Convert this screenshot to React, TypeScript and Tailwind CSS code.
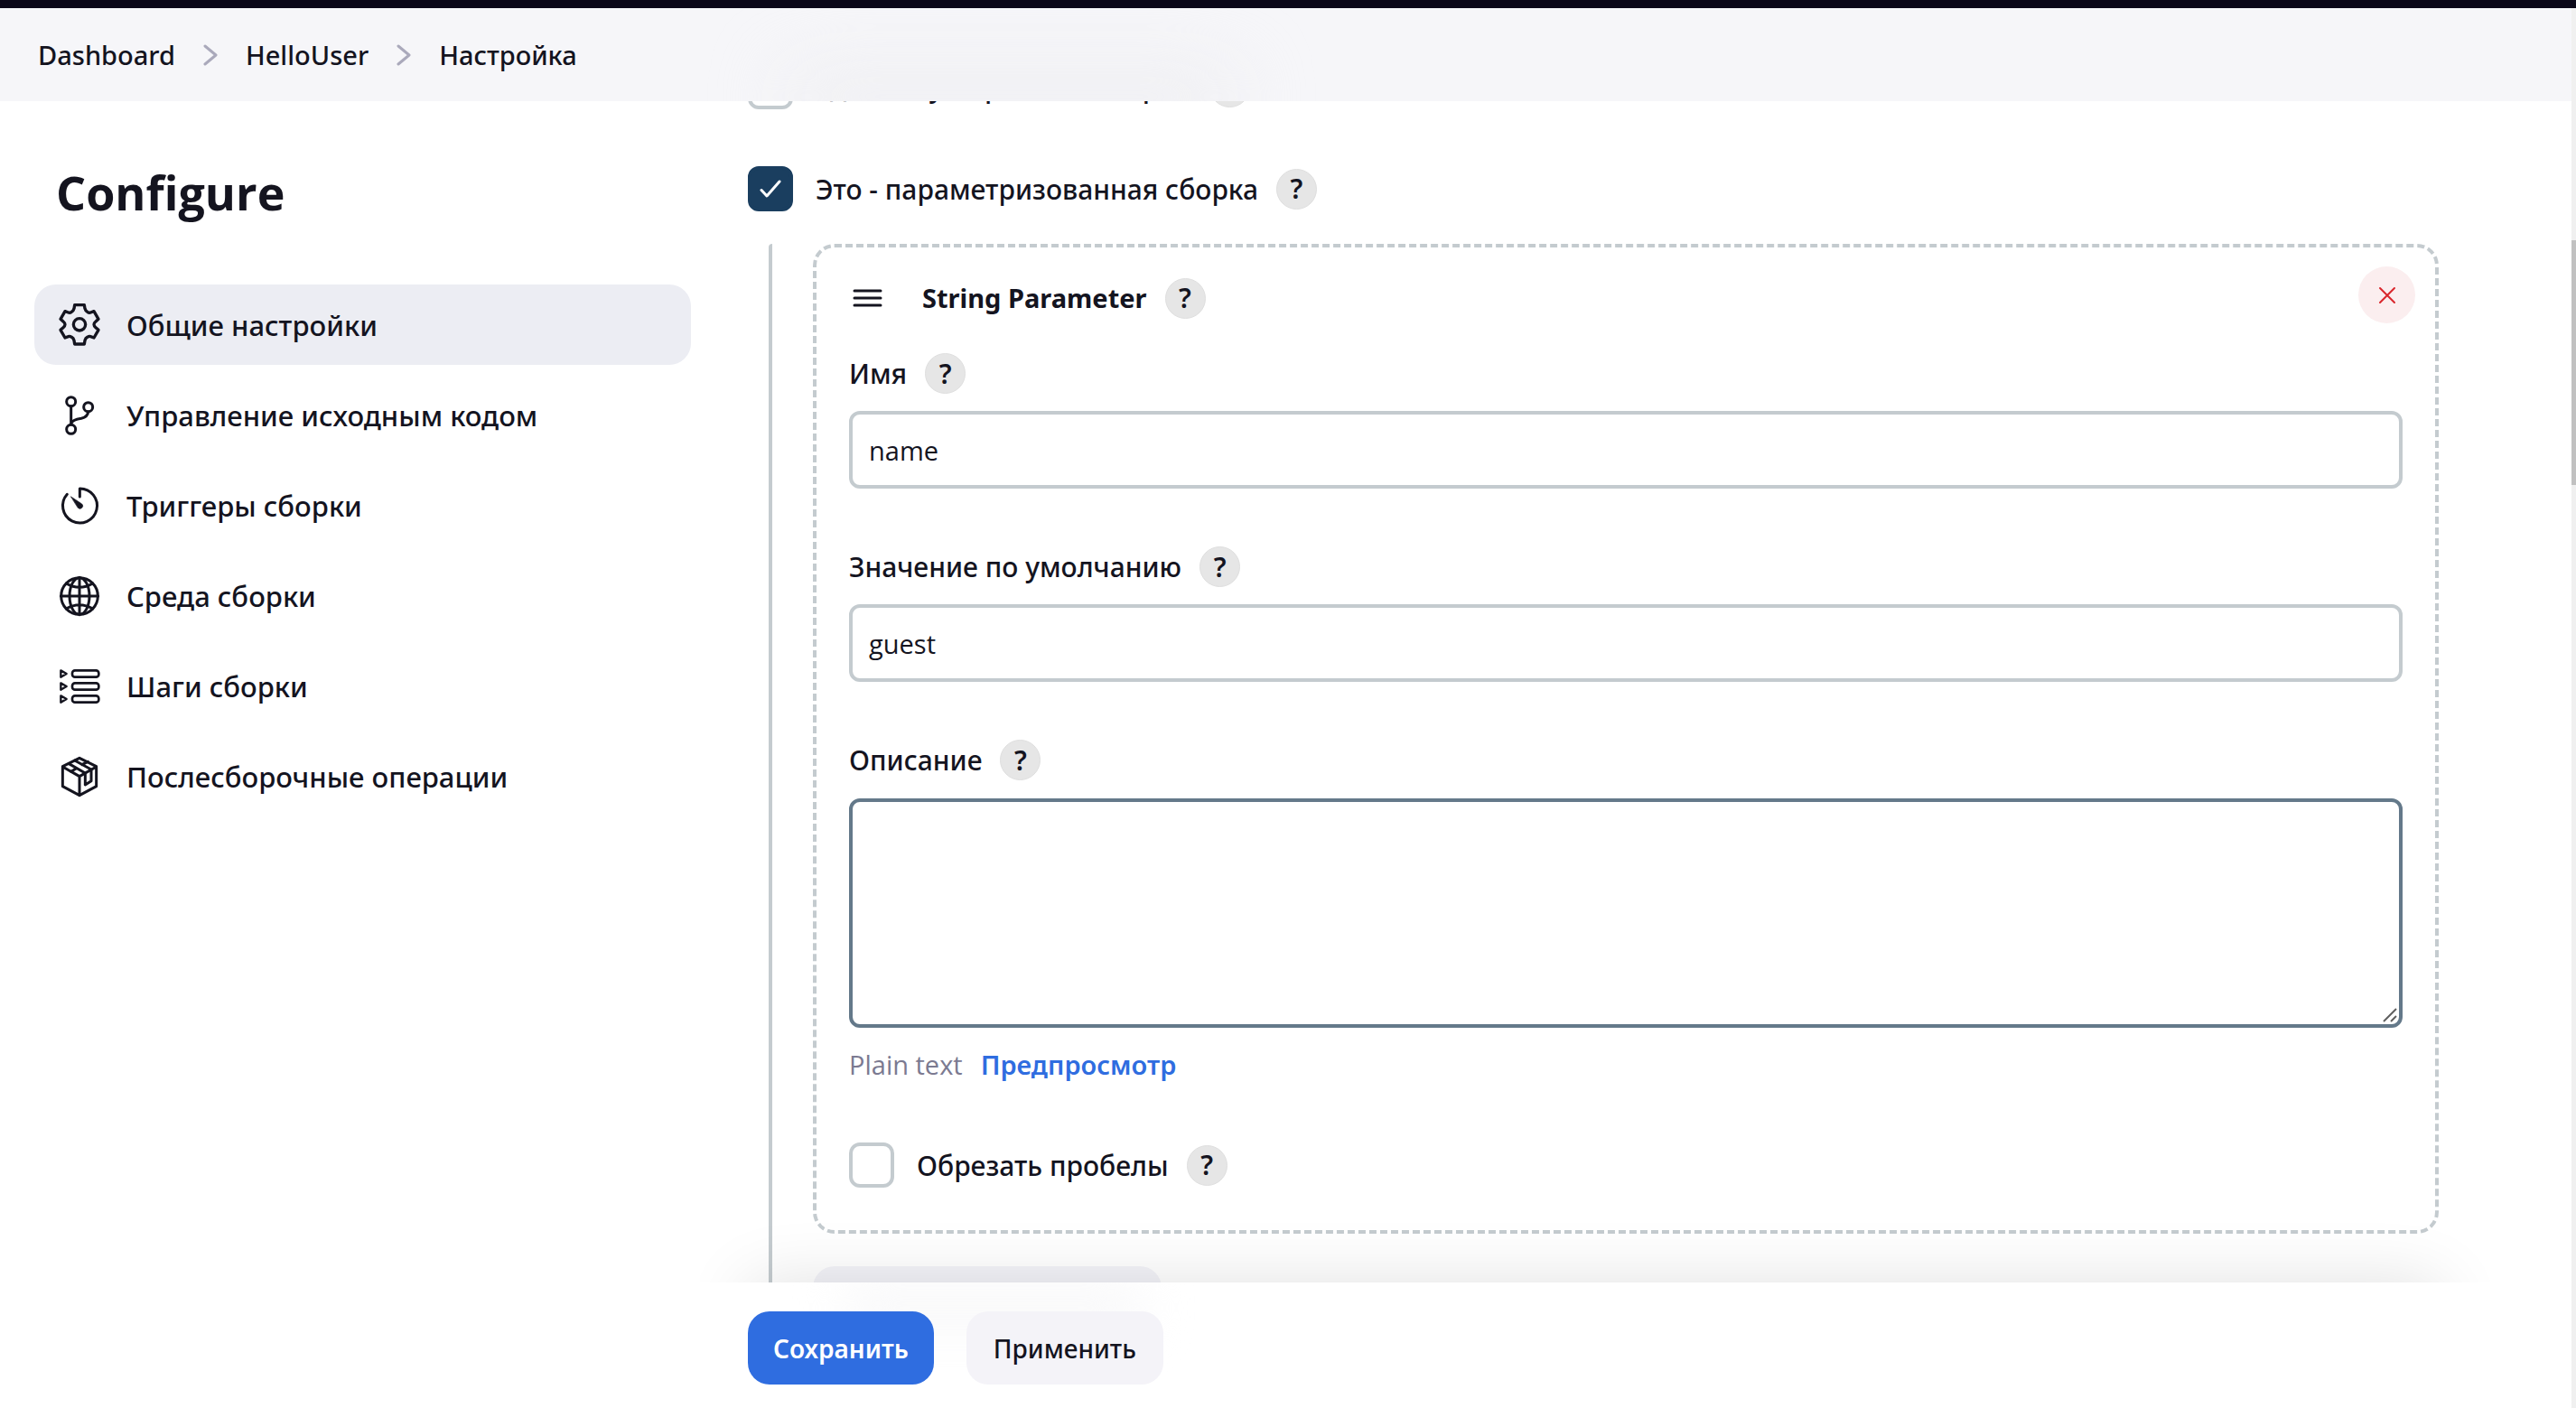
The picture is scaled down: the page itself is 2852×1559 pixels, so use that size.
import { useState, type ReactNode } from "react";

const ICON_STROKE = {
  fill: "none",
  stroke: "currentColor",
  strokeWidth: 9,
  strokeLinecap: "round" as const,
  strokeLinejoin: "round" as const,
};

function NavIcon({ viewBox, children }: { viewBox: string; children: ReactNode }) {
  return (
    <svg viewBox={viewBox} className="size-12 shrink-0" aria-hidden="true" {...ICON_STROKE}>
      {children}
    </svg>
  );
}

const NAV: { label: string; icon: ReactNode }[] = [
  {
    label: "Общие настройки",
    icon: (
      <NavIcon viewBox="42 47 144 144">
        <path d="M98 52h32l2 12Q134 72 140 75 146 79 151 77L162 73 177 99 168 107Q162 112 162 117 162 122 168 127L177 135 162 161 151 157Q146 155 140 159 134 162 132 170L130 182H98L96 170Q94 162 88 159 82 155 77 157L66 161 51 135 60 127Q66 122 66 117 66 112 60 107L51 99 66 73 77 77Q82 79 88 75 94 72 96 64Z" strokeWidth="10" />
        <circle cx="114" cy="117" r="20" strokeWidth="10" />
      </NavIcon>
    ),
  },
  {
    label: "Управление исходным кодом",
    icon: (
      <NavIcon viewBox="42 346 144 144">
        <circle cx="86" cy="372" r="15" />
        <circle cx="143" cy="390" r="15" />
        <circle cx="86" cy="464" r="15" />
        <path d="M86 388V448M143 406Q141 423 120 428 90 433 87 444" />
      </NavIcon>
    ),
  },
  {
    label: "Триггеры сборки",
    icon: (
      <NavIcon viewBox="42 648 144 144">
        <path d="M115 690V663A57 57 0 1 1 73 682" />
        <path d="M86 690L122 714A9 9 0 1 1 109 727Z" fill="currentColor" strokeWidth="2" />
      </NavIcon>
    ),
  },
  {
    label: "Среда сборки",
    icon: (
      <NavIcon viewBox="42 48 144 144">
        <circle cx="114" cy="120" r="61" />
        <ellipse cx="114" cy="120" rx="33" ry="61" />
        <path d="M114 58V182M52 120H176M70 78Q114 104 158 78M70 162Q114 136 158 162" />
      </NavIcon>
    ),
  },
  {
    label: "Шаги сборки",
    icon: (
      <NavIcon viewBox="42 350 144 144">
        {[380, 422, 464].map((y) => (
          <g key={y} strokeWidth="7">
            <path d={`M52 ${y - 11}L71 ${y}L52 ${y + 11}Z`} />
            <rect x="90" y={y - 11} width="88" height="22" rx="9" strokeWidth="8" />
          </g>
        ))}
      </NavIcon>
    ),
  },
  {
    label: "Послесборочные операции",
    icon: (
      <NavIcon viewBox="42 651 144 144">
        <path d="M114 661L170 689V755L114 785 58 755V689ZM58 690L114 722 170 690M114 722V785" />
        <path d="M98 669L153 699V737L133 750V711L79 680M86 706L104 695M122 683L142 673" />
      </NavIcon>
    ),
  },
];

function Help({ topic }: { topic: string }) {
  return (
    <button
      type="button"
      aria-label={`Справка: ${topic}`}
      className="flex size-[45px] shrink-0 items-center justify-center rounded-full border border-[#dfdfdf] bg-[#e6e6e6] text-[30px] leading-none font-semibold"
    >
      ?
    </button>
  );
}

function CheckRow({ id, label, initial = false }: { id: string; label: string; initial?: boolean }) {
  const [checked, setChecked] = useState(initial);
  return (
    <div className="flex h-[50px] items-center gap-5">
      <label htmlFor={id} className="flex items-center gap-[25px] text-[30px] font-medium">
        <span className="grid size-[50px] shrink-0 place-items-center">
          <input
            id={id}
            type="checkbox"
            checked={checked}
            onChange={(e) => setChecked(e.target.checked)}
            className="col-start-1 row-start-1 size-[50px] appearance-none rounded-xl border-4 border-[#c4cbcf] bg-white checked:border-[#1a3e5f] checked:bg-[#1a3e5f]"
          />
          {checked && (
            <svg viewBox="0 0 24 20" className="pointer-events-none col-start-1 row-start-1 h-5 w-6" fill="none" stroke="white" strokeWidth="3" strokeLinecap="round" strokeLinejoin="round" aria-hidden="true">
              <path d="M2 11.5L8 18 22 2" />
            </svg>
          )}
        </span>
        {label}
      </label>
      <Help topic={label} />
    </div>
  );
}

function FieldLabel({ id, label }: { id: string; label: string }) {
  return (
    <div className="flex h-[45px] items-center gap-5">
      <label htmlFor={id} className="text-[30px] font-medium">
        {label}
      </label>
      <Help topic={label} />
    </div>
  );
}

function TextField({ id, label, value }: { id: string; label: string; value: string }) {
  return (
    <div className="mb-16">
      <FieldLabel id={id} label={label} />
      <input
        id={id}
        type="text"
        defaultValue={value}
        className="mt-[19px] h-[86px] w-full rounded-xl border-4 border-[#c4cbcf] bg-white px-[18px] font-['Open_Sans',sans-serif] text-[29px] outline-none"
      />
    </div>
  );
}

function Chevron() {
  return (
    <svg viewBox="0 0 16 24" className="h-6 w-4" fill="none" stroke="#aaa9bb" strokeWidth="3" strokeLinecap="round" strokeLinejoin="round" aria-hidden="true">
      <path d="M2 2L14 12 2 22" />
    </svg>
  );
}

export default function App() {
  return (
    <div className="flex h-screen flex-col overflow-hidden bg-white font-['Noto_Sans',sans-serif] text-[#14141f]">
      <div className="h-[9px] shrink-0 bg-[#0b0819]" />
      <div className="flex min-h-0 flex-1">
        <div className="flex min-w-0 flex-1 flex-col">
          <header className="relative z-10 flex h-[103px] shrink-0 items-center overflow-hidden bg-[#f6f6f9] px-[42px]">
            <div className="pointer-events-none absolute top-[74px] left-[870px] h-12 w-[500px] rounded-full bg-[#ededf0] blur-2xl" />
            <nav aria-label="Навигация" className="relative flex items-center gap-[31px] text-[29px] font-medium">
              <a href="#dashboard">Dashboard</a>
              <Chevron />
              <a href="#hellouser">HelloUser</a>
              <Chevron />
              <a href="#configure">Настройка</a>
            </nav>
          </header>

          <div className="-mt-[41px] flex min-h-0 flex-1">
            <aside className="w-[790px] shrink-0 pt-[102px] pr-[25px] pl-[38px]">
              <h1 className="pl-6 font-['Open_Sans',sans-serif] text-[52px] leading-[80px] font-bold">Configure</h1>
              <nav aria-label="Configure" className="mt-[62px] flex flex-col gap-[11px]">
                {NAV.map(({ label, icon }, i) => (
                  <a
                    key={label}
                    href={`#section-${i}`}
                    className={
                      i === 0
                        ? "flex h-[89px] items-center gap-7 rounded-3xl bg-[#ecedf3] pl-[26px] text-[31px] font-medium"
                        : "flex h-[89px] items-center gap-7 rounded-3xl pl-[26px] text-[31px] font-medium"
                    }
                  >
                    {icon}
                    <span className="pt-0.5">{label}</span>
                  </a>
                ))}
              </nav>
            </aside>

            <main className="flex min-w-0 flex-1 flex-col">
              <div className="min-h-0 flex-1 pr-[147px] pl-[38px]">
                <CheckRow id="discard" label="Удалять устаревшие сборки" />
                <div className="mt-[63px]">
                  <CheckRow id="parameterized" label="Это - параметризованная сборка" initial />
                </div>

                <div className="mt-9 ml-[23px] rounded-t border-l-4 border-[#c4cbcf] pb-10 pl-[45px]">
                  <section className="rounded-3xl border-4 border-dashed border-[#c4cbcf] px-9 pt-[21px] pb-[47px]">
                    <div className="flex h-[70px] items-center">
                      <svg viewBox="0 0 33 20" className="ml-1 h-5 w-[33px]" stroke="currentColor" strokeWidth="3" strokeLinecap="round" aria-hidden="true">
                        <path d="M2 2H31M2 10H31M2 18H31" />
                      </svg>
                      <h2 className="mr-5 ml-11 text-[29px] font-bold">String Parameter</h2>
                      <Help topic="String Parameter" />
                      <button type="button" aria-label="Удалить" className="-mr-[14px] ml-auto flex size-[63px] items-center justify-center self-start rounded-full bg-[#fbeeef] text-[#d9262c]">
                        <svg viewBox="0 0 20 20" className="size-5" stroke="currentColor" strokeWidth="2" strokeLinecap="round" aria-hidden="true">
                          <path d="M2 2L18 18M18 2L2 18" />
                        </svg>
                      </button>
                    </div>

                    <div className="mt-[26px]">
                      <TextField id="name" label="Имя" value="name" />
                      <TextField id="default" label="Значение по умолчанию" value="guest" />
                      <FieldLabel id="description" label="Описание" />
                      <div className="relative mt-5">
                        <textarea
                          id="description"
                          className="block h-[254px] w-full resize-none rounded-xl border-4 border-[#64798a] bg-white px-[18px] py-3 font-['Open_Sans',sans-serif] text-[29px] outline-none"
                        />
                        <svg viewBox="0 0 16 16" className="pointer-events-none absolute right-1.5 bottom-1.5 size-4" stroke="#5f5f5f" strokeWidth="2" aria-hidden="true">
                          <path d="M1 15L15 1M9 15L15 9" />
                        </svg>
                      </div>
                    </div>

                    <div className="mt-[18px] flex h-[45px] items-center gap-5 text-[29px]">
                      <span className="font-['Open_Sans',sans-serif] text-[#7b7a91]">Plain text</span>
                      <a href="#preview" className="font-semibold text-[#2f6de0]">
                        Предпросмотр
                      </a>
                    </div>

                    <div className="mt-16">
                      <CheckRow id="trim" label="Обрезать пробелы" />
                    </div>
                  </section>

                  <button type="button" aria-label="Добавить параметр" className="mt-9 block h-[81px] w-[386px] rounded-3xl bg-[#f3f3f8]" />
                </div>
              </div>

              <footer className="relative h-[139px] shrink-0 bg-white">
                <div className="pointer-events-none absolute right-[70px] bottom-full -left-[15px] h-20 overflow-hidden">
                  <div className="mt-20 mr-[75px] ml-[53px] h-40 shadow-[0_0_75px_rgba(0,0,0,0.12)]" />
                </div>
                <div className="flex h-full items-start gap-9 overflow-hidden pt-8 pl-[38px]">
                  <div className="pointer-events-none absolute inset-0 overflow-hidden">
                    <div className="ml-[140px] h-14 w-[340px] rounded-full bg-[#f9f9fa] blur-xl" />
                  </div>
                  <button type="submit" className="relative h-[81px] rounded-3xl bg-[#2f6de0] px-7 text-[28px] font-semibold text-white">
                    Сохранить
                  </button>
                  <button type="button" className="relative h-[81px] rounded-3xl bg-[#f4f3f8] px-[30px] text-[28px] font-medium">
                    Применить
                  </button>
                </div>
              </footer>
            </main>
          </div>
        </div>

        <div className="flex w-[5px] shrink-0 flex-col bg-[#f0f0f0]" aria-hidden="true">
          <div className="mt-[257px] h-[271px] bg-[#c1c1c1]" />
        </div>
      </div>
    </div>
  );
}
